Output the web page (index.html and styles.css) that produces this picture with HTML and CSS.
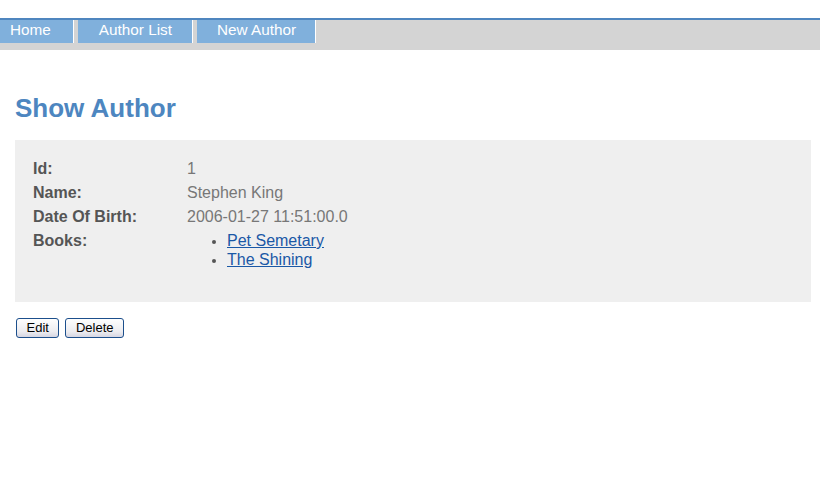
FILE: index.html
```html
<!DOCTYPE html>
<html lang="en">
<head>
    <meta charset="UTF-8">
    <title>Show Author</title>
    <link rel="stylesheet" href="styles.css">
</head>
<body>
    <div class="nav">
        <a class="tab first" href="#">Home</a>
        <a class="tab" href="#">Author List</a>
        <a class="tab last" href="#">New Author</a>
    </div>

    <div class="body">
        <h1>Show Author</h1>

        <div class="dialog">
            <div class="row">
                <div class="name">Id:</div>
                <div class="value">1</div>
            </div>
            <div class="row">
                <div class="name">Name:</div>
                <div class="value">Stephen King</div>
            </div>
            <div class="row">
                <div class="name">Date Of Birth:</div>
                <div class="value">2006-01-27 11:51:00.0</div>
            </div>
            <div class="row">
                <div class="name">Books:</div>
                <div class="value">
                    <ul>
                        <li><a href="#">Pet Semetary</a></li>
                        <li><a href="#">The Shining</a></li>
                    </ul>
                </div>
            </div>
        </div>

        <div class="buttons">
            <button type="button">Edit</button>
            <button type="button">Delete</button>
        </div>
    </div>
</body>
</html>
```

FILE: styles.css
```css
body {
    margin: 0;
    font-family: "Liberation Sans", Arial, sans-serif;
    font-size: 16px;
    background: #fff;
}
.nav {
    margin-top: 18px;
    border-top: 2px solid #4f86bf;
    background: #d4d4d4;
    height: 30px;
    display: flex;
    align-items: flex-start;
}
.tab {
    display: block;
    background: #80b0dc;
    color: #fff;
    text-decoration: none;
    font-size: 15.3px;
    line-height: 19px;
    padding: 0 20px 4px 21px;
    border-right: 1px solid #fff;
    margin-right: 4px;
}
.tab.first {
    padding-left: 10px;
    padding-right: 22px;
}
.tab.last {
    padding-left: 20px;
    padding-right: 19px;
}
.body {
    padding: 0 9px 0 15px;
}
h1 {
    margin: 43px 0 17px;
    font-size: 26px;
    line-height: 30px;
    color: #4d86c0;
}
.dialog {
    background: #efefef;
    padding: 17px 18px 33px;
}
.row {
    display: flex;
    line-height: 24px;
}
.name {
    width: 154px;
    font-weight: bold;
    color: #555;
}
.value {
    color: #777;
}
ul {
    margin: 0;
    padding: 2px 0 0 40px;
    color: #555;
}
li {
    line-height: 19px;
}
li::marker {
    font-size: 13px;
}
li a {
    color: #1a58a6;
}
.buttons {
    margin-top: 16px;
    padding-left: 1px;
    display: flex;
    gap: 6px;
}
button {
    font-family: inherit;
    font-size: 13px;
    line-height: 18px;
    padding: 0 9.5px;
    margin: 0;
    border: 1px solid #1c4f8c;
    border-radius: 3px;
    background: linear-gradient(#fefefe, #ececf0 70%, #d6d6e2);
    color: #000;
}
```
